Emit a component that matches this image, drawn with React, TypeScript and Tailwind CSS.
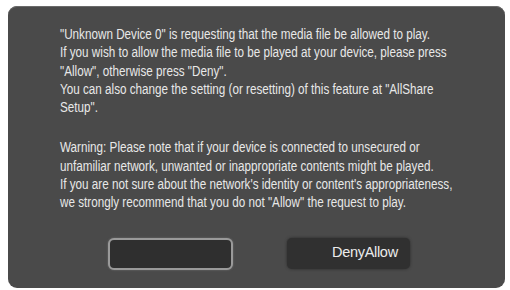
export default function App() {
  return (
    <div className="w-[510px] h-[290px] bg-white pt-[6px] pl-[8px] pr-[5px] pb-[2px] overflow-hidden">
      <div
        className="h-full rounded-[9px] bg-[#4a4a4a] pl-[52px] pt-[19px] text-[#e8e8e8] shadow-[inset_0_1px_0_#6a6a6a]"
        style={{ fontFamily: '"Liberation Sans", Arial, sans-serif' }}
      >
        <div className="origin-left scale-x-[0.835] whitespace-nowrap text-[14px] leading-[18.3px]">
          <p>
            "Unknown Device 0" is requesting that the media file be allowed to play.
            <br />
            If you wish to allow the media file to be played at your device, please press
            <br />
            "Allow", otherwise press "Deny".
            <br />
            You can also change the setting (or resetting) of this feature at "AllShare
            <br />
            Setup".
          </p>
          <p className="mt-[22px]">
            Warning: Please note that if your device is connected to unsecured or
            <br />
            unfamiliar network, unwanted or inappropriate contents might be played.
            <br />
            If you are not sure about the network's identity or content's appropriateness,
            <br />
            we strongly recommend that you do not "Allow" the request to play.
          </p>
        </div>

        <div className="mt-[26px] ml-[48px] flex gap-[54px]">
          <button className="h-[32px] w-[125px] rounded-[6px] border-2 border-[#9a9a9a] bg-[#2f2f2f] shadow-[0_0_2px_#777]" />
          <button className="h-[31px] w-[123px] rounded-[5px] bg-[#303030] pl-[45px] text-left text-[14.5px] tracking-[-0.3px] text-[#ececec] shadow-[0_0_3px_#2a2a2a]">
            DenyAllow
          </button>
        </div>
      </div>
    </div>
  );
}
